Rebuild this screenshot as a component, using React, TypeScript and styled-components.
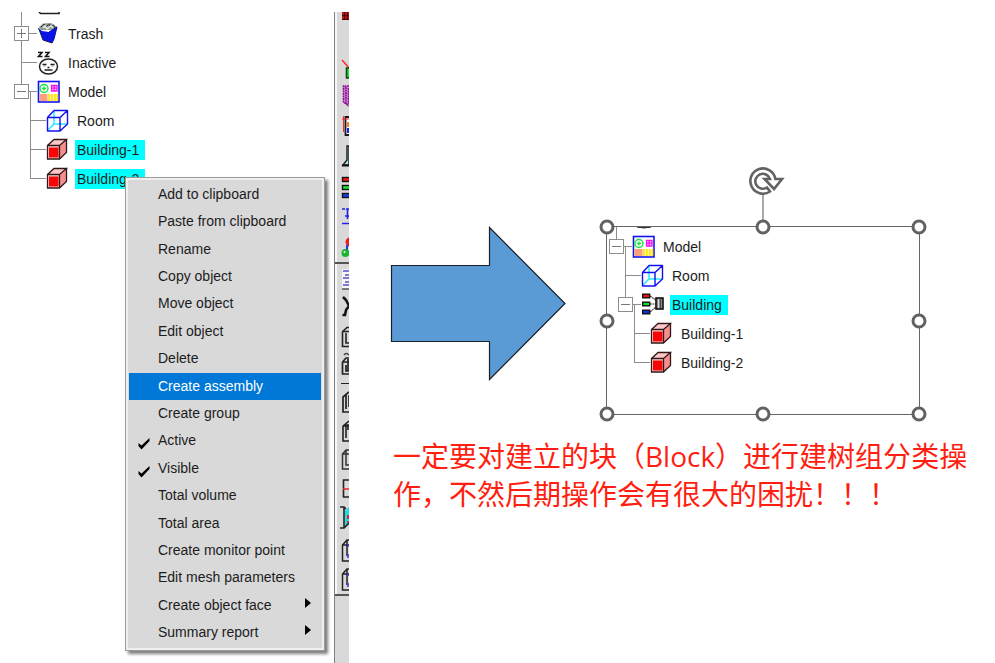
import React from "react";
import styled, { createGlobalStyle, css } from "styled-components";

const GlobalStyle = createGlobalStyle`
  * { box-sizing: border-box; }
  body { margin: 0; background: #fff; color: #1c1c1c; font-family: "Liberation Sans", Arial, sans-serif; }
  button { font: inherit; color: inherit; border: 0; padding: 0; background: none; }
`;

const guide = "#8c8c8c";

const Page = styled.main`
  display: grid;
  grid-template-columns: 349px minmax(0, 1fr);
  min-height: 100vh;
`;

const ModelPanel = styled.section`
  position: relative;
  display: flex;
  justify-content: space-between;
  min-height: 650px;
  margin-top: 12px;
`;

/* ---------- tree ---------- */

const TreeList = styled.ul<{ $nested?: boolean }>`
  list-style: none;
  margin: 0;
  padding: 0 0 0 ${(p) => (p.$nested ? 9 : 0)}px;
`;

const RootTree = styled(TreeList)`
  padding-left: 14px;
`;

const TreeItem = styled.li<{ $nested?: boolean }>`
  position: relative;
  &::before {
    content: "";
    position: absolute;
    left: 7px;
    top: 0;
    bottom: 0;
    width: 1px;
    background: ${guide};
  }
  ${(p) => p.$nested && css`&:first-child::before { top: -14px; }`}
  &:last-child::before { bottom: auto; height: 15px; }
  ${(p) => p.$nested && css`&:first-child:last-child::before { height: 29px; }`}
`;

const TreeRow = styled.div`
  display: flex;
  align-items: center;
  height: 29px;
`;

const CutRow = styled.li<{ $height: number }>`
  position: relative;
  display: flex;
  height: ${(p) => p.$height}px;
  padding-left: 7px;
  overflow: hidden;
  &::before {
    content: "";
    width: 1px;
    margin-right: 15px;
    background: ${guide};
  }
`;

const Branch = styled.span`
  position: relative;
  display: flex;
  width: 23px;
  height: 15px;
  &::before {
    content: "";
    position: absolute;
    left: 8px;
    right: 0;
    top: 7px;
    height: 1px;
    background: ${guide};
  }
`;

const Expander = styled.button`
  position: relative;
  display: flex;
  width: 15px;
  height: 15px;
  border: 1px solid ${guide};
  background: #fff;
`;

const TreeIcon = styled.svg`
  flex: none;
  width: 24px;
  height: 24px;
  margin-right: 5px;
`;

const Label = styled.span<{ $selected?: boolean }>`
  padding: 0 6px 0 2px;
  font-size: 14px;
  line-height: 20px;
  white-space: nowrap;
  background: ${(p) => (p.$selected ? "#00ffff" : "transparent")};
`;

type IconName = "trash" | "inactive" | "model" | "room" | "block" | "group";

const drawings: Record<IconName, React.ReactNode> = {
  trash: (
    <>
      <path d="M2 5 6 1.500 14 1 20 5 17 8 4 8Z" fill="#8d9a96" />
      <path d="M4 5 7 2 9 5 12 2 13 5 17 3 18 6" fill="none" stroke="#222" strokeDasharray="2 1" />
      <path d="M6 6 8 4 10 7 14 4 16 6" fill="none" stroke="#e8e8e8" strokeWidth="1.5" />
      <path d="M1.500 6 5 9 12 10 20 5 17 17 15 21 6 18Z" fill="#0a14e6" />
      <path d="M1.500 6 6 18 15 21" fill="none" stroke="#1a1a50" />
      <path d="M12 10 20 5 17 17 15 21" fill="none" stroke="#0808a0" />
    </>
  ),
  inactive: (
    <>
      <path d="M1 1.500H5L1.500 5.500H5.500M8 1.500H12L8.500 5.500H12.500" fill="none" stroke="#111" strokeWidth="1.5" />
      <ellipse cx="11.500" cy="15.500" rx="9" ry="7.500" fill="#fff" stroke="#222" strokeWidth="1.5" />
      <path d="M5.500 13.500H9.500M13.500 13.500H17.500M10.500 16.500H12.500M7.500 19H15.500" stroke="#222" strokeWidth="1.3" />
      <path d="M6.500 15H8.500M14.500 15H16.500" stroke="#888" />
    </>
  ),
  model: (
    <>
      <rect x="1.500" y="1.500" width="20.500" height="20.500" fill="#fff" stroke="#1414ee" strokeWidth="1.6" />
      <circle cx="7" cy="8.500" r="4" fill="none" stroke="#12e63a" strokeWidth="1.4" />
      <path d="M5 8.500H9M7 6.500V10.500" stroke="#12e63a" strokeWidth="1.3" />
      <path d="M14.500 5.500H20V11H14.500ZM17.200 5.500V11M14.500 8.200H20" fill="#ffc8ff" stroke="#f411e8" strokeWidth="1.3" />
      <rect x="2.500" y="14" width="8" height="7" fill="#ffa078" />
      <rect x="11" y="14" width="10" height="7" fill="#fff9a0" />
      <path d="M12 14V21M15 14V21M18 14V21M20.500 14V21" stroke="#ffe000" strokeWidth="1.4" />
    </>
  ),
  room: (
    <>
      <path d="M8 2V15H21M8 15 2 21" fill="none" stroke="#28eaff" strokeWidth="1.5" />
      <path d="M1.500 8.500H14V22H1.500ZM1.500 8.500 8 1.500H21.500L14 8.500M21.500 1.500V15L14 22" fill="none" stroke="#1212ef" strokeWidth="1.4" strokeLinejoin="round" />
    </>
  ),
  block: (
    <>
      <path d="M1.500 7.500 8 1.500H20.500L14 7.500Z" fill="#ffc8c8" />
      <path d="M14 7.500 20.500 1.500V14.500L14 21Z" fill="#f58f8f" />
      <path d="M1.500 7.500H13.500V21H1.500Z" fill="#ffd2d2" />
      <rect x="3" y="9.500" width="9.500" height="10" fill="#fa0505" />
      <path d="M1.500 7.500H13.500V21H1.500ZM1.500 7.500 8 1.500H20.500L13.500 7.500M20.500 1.500V14.500L13.500 21" fill="none" stroke="#301818" strokeWidth="1.3" />
    </>
  ),
  group: (
    <>
      <path d="M9 3 15 7M9 11H15M9 19 15 14" stroke="#444" strokeWidth="1.200" strokeDasharray="2 .5" />
      <rect x="1.700" y="1.200" width="7" height="3.600" fill="#f01010" stroke="#111" strokeWidth="1.4" />
      <rect x="1.700" y="9.200" width="7" height="3.600" fill="#10e030" stroke="#111" strokeWidth="1.4" />
      <rect x="1.700" y="17.200" width="7" height="3.600" fill="#1030e8" stroke="#111" strokeWidth="1.4" />
      <rect x="15" y="5" width="7" height="11" fill="#8c8c8c" stroke="#111" strokeWidth="1.6" />
      <path d="M17.500 6V15" stroke="#ddd" />
      <path d="M19.500 6V15" stroke="#444" />
    </>
  ),
};

interface Node {
  label: string;
  icon: IconName;
  selected?: boolean;
  open?: boolean;
  children?: Node[];
}

function TreeNode({ node, nested }: { node: Node; nested?: boolean }) {
  return (
    <TreeItem $nested={nested}>
      <TreeRow>
        <Branch>
          {node.open !== undefined && (
            <Expander aria-label={`Toggle ${node.label}`} aria-expanded={node.open}>
              <svg width="13" height="13" viewBox="0 0 13 13" aria-hidden="true">
                <path d={node.open ? "M2 6.500H11" : "M2 6.500H11M6.500 2V11"} stroke="#777" />
              </svg>
            </Expander>
          )}
        </Branch>
        <TreeIcon viewBox="0 0 24 24" aria-hidden="true">{drawings[node.icon]}</TreeIcon>
        <Label $selected={node.selected}>{node.label}</Label>
      </TreeRow>
      {node.children && (
        <TreeList $nested>
          {node.children.map((c) => <TreeNode key={c.label} node={c} nested />)}
        </TreeList>
      )}
    </TreeItem>
  );
}

const before: Node[] = [
  { label: "Trash", icon: "trash", open: false },
  { label: "Inactive", icon: "inactive" },
  {
    label: "Model", icon: "model", open: true,
    children: [
      { label: "Room", icon: "room" },
      { label: "Building-1", icon: "block", selected: true },
      { label: "Building-2", icon: "block", selected: true },
    ],
  },
];

const after: Node[] = [
  {
    label: "Model", icon: "model", open: true,
    children: [
      { label: "Room", icon: "room" },
      {
        label: "Building", icon: "group", open: true, selected: true,
        children: [
          { label: "Building-1", icon: "block" },
          { label: "Building-2", icon: "block" },
        ],
      },
    ],
  },
];

/* ---------- context menu ---------- */

const ContextMenu = styled.div`
  position: absolute;
  left: 125px;
  top: 165px;
  bottom: 12px;
  z-index: 3;
  display: grid;
  grid-auto-rows: 1fr;
  width: 200px;
  padding: 3px;
  border: 1px solid #9c9c9c;
  background: #d9d9d9;
  box-shadow: inset 0 0 0 2px #efefef, 3px 3px 3px rgba(0, 0, 0, 0.5);
`;

const MenuItem = styled.button<{ $active?: boolean }>`
  display: grid;
  grid-template-columns: 29px 1fr 20px;
  align-items: center;
  padding-bottom: 2px;
  font-size: 14px;
  text-align: left;
  white-space: nowrap;
  color: ${(p) => (p.$active ? "#fff" : "#1c1c1c")};
  background: ${(p) => (p.$active ? "#0078d7" : "transparent")};
`;

const MenuMark = styled.svg`
  width: 14px;
  height: 14px;
  margin: 6px 0 0 8px;
`;

const MenuArrow = styled.svg`
  width: 8px;
  height: 12px;
  margin: 0 0 4px 3px;
`;

const menu: { text: string; checked?: boolean; sub?: boolean; active?: boolean }[] = [
  { text: "Add to clipboard" },
  { text: "Paste from clipboard" },
  { text: "Rename" },
  { text: "Copy object" },
  { text: "Move object" },
  { text: "Edit object" },
  { text: "Delete" },
  { text: "Create assembly", active: true },
  { text: "Create group" },
  { text: "Active", checked: true },
  { text: "Visible", checked: true },
  { text: "Total volume" },
  { text: "Total area" },
  { text: "Create monitor point" },
  { text: "Edit mesh parameters" },
  { text: "Create object face", sub: true },
  { text: "Summary report", sub: true },
];

/* ---------- toolbar ---------- */

const Toolbar = styled.div`
  width: 15px;
  border-left: 1px solid #808080;
  background: #d9d9d9;
`;

const ToolGroup = styled.div`
  display: flex;
  flex-direction: column;
  padding-left: 2px;
  border-bottom: 2px solid #555;
  box-shadow: inset 2px 0 0 #f7f7f7;
`;

const Tool = styled.button<{ $height: number }>`
  display: flex;
  width: 12px;
  height: ${(p) => p.$height}px;
  overflow: hidden;
`;

const Divider = styled.hr`
  width: 8px;
  height: 1px;
  margin: 3px 0 3px 4px;
  border: 0;
  background: #222;
`;

const Spacer = styled.div`
  height: 4px;
`;

const box = (
  <>
    <path d="M5.500 9.500 10 5.500H12M5.500 9.500V24.500H12M5.500 9.500H12M9 11V21H12" fill="none" stroke="#222" strokeWidth="1.6" />
  </>
);

const displayTools: [string, number, React.ReactNode][] = [
  ["Grid", 40, <><rect x="5" y="0" width="7" height="8" fill="#4a0808" /><path d="M5 1.500H12M5 5.500H12" stroke="#e01818" strokeWidth="2" strokeDasharray="2 1" /></>],
  ["Probe", 30, <><path d="M5 8 12 16" stroke="#ff2a2a" strokeWidth="1.500" /><path d="M12 16H9.500V26H12" fill="#13e430" stroke="#1c3c1c" strokeWidth="1.600" /></>],
  ["Surface", 30, <path d="M12 4 6.500 4V20L12 24M9 5V22M11.500 6V22" fill="#d78bdd" stroke="#8a168f" strokeWidth="1.600" strokeDasharray="2 .5" />],
  ["Plane cut", 30, <><path d="M12 5H8.500V23H12" fill="#fff" stroke="#181818" strokeWidth="1.800" /><path d="M5 7H12M6.500 4V20" stroke="#f52a2a" /><rect x="10" y="10" width="2" height="5" fill="#ff7a18" /><rect x="10" y="16" width="2" height="5" fill="#2020ef" /></>],
  ["Inspect", 30, <><path d="M12 4H10V18L6 23H12Z" fill="#aee4ee" stroke="#222" strokeWidth="1.500" /><path d="M5 23.500H12" stroke="#111" strokeWidth="2" /></>],
  ["Assemblies", 30, <><rect x="5.500" y="5.500" width="8" height="4" fill="#f01616" stroke="#111" strokeWidth="1.400" /><rect x="5.500" y="13.500" width="8" height="4" fill="#18e434" stroke="#111" strokeWidth="1.400" /><rect x="5.500" y="21.500" width="8" height="4" fill="#1840f0" stroke="#111" strokeWidth="1.400" /></>],
  ["Networks", 30, <path d="M5 7H8M9 7H12M10.500 7V17M5 21.500H12M8 14H12" fill="none" stroke="#2020ef" strokeWidth="1.600" />],
  ["Materials", 30, <><circle cx="13" cy="10" r="4.500" fill="#ed1e20" /><path d="M10 13V20" stroke="#3030e0" strokeWidth="2" /><circle cx="8.500" cy="21" r="4" fill="#18b52c" /><circle cx="7.500" cy="20" r="1" fill="#fff" /></>],
];

const editTools: [string, React.ReactNode][] = [
  ["Edit", <><rect x="5" y="5" width="7" height="20" fill="#f4f4f8" /><path d="M6 7H12M8 11H12M6 14H12M8 18H12M6 21H12" stroke="#5353c7" strokeWidth="1.500" /><path d="M5 25H12" stroke="#555" strokeWidth="1.500" /></>],
  ["Delete", <path d="M6 4 9 7 12 13M12 13 9 17 8 22H5.500" fill="none" stroke="#111" strokeWidth="2.500" />],
  ["Move", box],
  ["Copy", <><path d="M7 4Q9 1 12 4" fill="none" stroke="#444" strokeWidth="1.500" /><path d="M5.500 11 9 7H12M5.500 11V23H12M5.500 11H12M9 14V20H12M11 8V20" fill="none" stroke="#222" strokeWidth="1.700" /></>],
];

const alignTools: [string, React.ReactNode][] = [
  ["Align left", <path d="M12 5 6 10V25H12M9 8V22M11 9H12V20" fill="none" stroke="#222" strokeWidth="1.700" />],
  ["Align center", <path d="M12 5 6 10V25H12M6 10H12M9 8V22M11 8V14" fill="none" stroke="#222" strokeWidth="1.600" />],
  ["Align faces", <path d="M12 5H9L5.500 9V24H12M5.500 9H12M9 5V20H12" fill="none" stroke="#333" strokeWidth="1.500" />],
  ["Align edge", <><path d="M12 6H6.500V23H12" fill="none" stroke="#222" strokeWidth="1.600" /><path d="M6 15H12" stroke="#f12323" strokeWidth="1.500" /></>],
  ["Align vertex", <><path d="M8 8 12 4V20L8 24Z" fill="#19dde7" /><path d="M3 4H7L9 6M3 25H7L12 20M7 4V25" fill="none" stroke="#222" strokeWidth="1.600" /><path d="M11 12V20" stroke="#e22" strokeWidth="2" strokeDasharray="4 2" /></>],
];

const morphTools = ["Morph faces", "Morph edges"];

const morphDrawing = (
  <>
    <path d="M12 4H10L5.500 9V25H12M5.500 9H12M10 4V20" fill="none" stroke="#222" strokeWidth="1.500" />
    <path d="M11 8V11M11 18V22" stroke="#3434e8" strokeWidth="1.500" />
  </>
);

function ToolButton({ name, height, children }: { name: string; height: number; children: React.ReactNode }) {
  return (
    <Tool $height={height} aria-label={name}>
      <svg width="12" height={height} viewBox={`0 0 12 ${height}`} aria-hidden="true">{children}</svg>
    </Tool>
  );
}

/* ---------- result side ---------- */

const Slide = styled.section`
  padding-top: 226px;
`;

const Comparison = styled.div`
  display: flex;
  align-items: flex-start;
  gap: 40px;
  padding: 0 75px 0 41px;
`;

const BigArrow = styled.svg`
  flex: none;
  width: 176px;
  height: 156px;
`;

const SelectionFrame = styled.div`
  position: relative;
  flex: 1;
  min-width: 200px;
  padding-bottom: 37px;
  border: 1px solid #666;
`;

const FrameTree = styled(TreeList)`
  padding-left: 2px;
`;

const Handle = styled.span<{ $x: number; $y: number }>`
  position: absolute;
  left: ${(p) => p.$x}%;
  top: ${(p) => p.$y}%;
  width: 15px;
  height: 15px;
  border: 3px solid #626262;
  border-radius: 50%;
  background: #fff;
  transform: translate(-50%, -50%);
`;

const RotateHandle = styled.svg`
  position: absolute;
  left: 50%;
  bottom: 100%;
  width: 48px;
  height: 62px;
  transform: translateX(-50%);
`;

const Caption = styled.p`
  margin: 22px 0 0;
  padding: 0 20px 0 44px;
  font-family: "Open Sans", "Noto Sans CJK SC", sans-serif;
  font-size: 28px;
  line-height: 38px;
  color: #ff1e0f;
`;

const handles: [number, number][] = [[0, 0], [50, 0], [100, 0], [0, 50], [100, 50], [0, 100], [50, 100], [100, 100]];

export default function App() {
  return (
    <>
      <GlobalStyle />
      <Page>
        <ModelPanel>
          <RootTree>
            <CutRow $height={7}>
              <svg width="24" height="7" viewBox="0 0 24 7" aria-hidden="true">
                <path d="M2 0 3.500 1.500H22V0" fill="none" stroke="#222" strokeWidth="1.600" />
              </svg>
            </CutRow>
            {before.map((n) => <TreeNode key={n.label} node={n} />)}
          </RootTree>
          <Toolbar>
            <ToolGroup>
              {displayTools.map(([name, height, art]) => (
                <ToolButton key={name} name={name} height={height}>{art}</ToolButton>
              ))}
            </ToolGroup>
            <ToolGroup>
              {editTools.map(([name, art]) => <ToolButton key={name} name={name} height={29}>{art}</ToolButton>)}
              <Divider />
              {alignTools.map(([name, art]) => <ToolButton key={name} name={name} height={29}>{art}</ToolButton>)}
              <Spacer />
              {morphTools.map((name) => <ToolButton key={name} name={name} height={29}>{morphDrawing}</ToolButton>)}
            </ToolGroup>
          </Toolbar>
          <ContextMenu role="menu">
            {menu.map((m) => (
              <MenuItem
                key={m.text}
                $active={m.active}
                role={m.checked ? "menuitemcheckbox" : "menuitem"}
                aria-checked={m.checked}
                aria-haspopup={m.sub ? "menu" : undefined}
              >
                {m.checked ? (
                  <MenuMark viewBox="0 0 14 14" aria-hidden="true">
                    <path d="M1.500 7V10L4.500 13.500 12.500 5V2L4.500 9.500Z" fill="#000" />
                  </MenuMark>
                ) : <span />}
                <span>{m.text}</span>
                {m.sub && (
                  <MenuArrow viewBox="0 0 8 12" aria-hidden="true">
                    <path d="M1 1 7 6 1 11Z" fill="#000" />
                  </MenuArrow>
                )}
              </MenuItem>
            ))}
          </ContextMenu>
        </ModelPanel>

        <Slide>
          <Comparison>
            <BigArrow viewBox="0 0 176 156" aria-hidden="true">
              <path d="M1.500 39.500H99.500V1.500L175 77.500 99.500 153.500V115.500H1.500Z" fill="#5b9bd5" stroke="#1b1f26" strokeWidth="1.200" />
            </BigArrow>
            <SelectionFrame>
              <FrameTree>
                <CutRow $height={5}>
                  <svg width="24" height="5" viewBox="0 0 24 5" aria-hidden="true">
                    <path d="M5 0Q12 2 19 0Z" fill="#222" stroke="#333" />
                  </svg>
                </CutRow>
                {after.map((n) => <TreeNode key={n.label} node={n} />)}
              </FrameTree>
              <RotateHandle viewBox="-24 -16 48 62" aria-hidden="true">
                <path d="M0 13V46" stroke="#555" />
                <path d="M12.400 -2A12.600 12.600 0 1 0 7 10.500L4 6.500A7.500 7.500 0 1 1 7 -2H1.500L11 8 19 -2Z" fill="#fff" stroke="#626262" strokeWidth="2.600" />
              </RotateHandle>
              {handles.map(([x, y]) => <Handle key={`${x}-${y}`} $x={x} $y={y} />)}
            </SelectionFrame>
          </Comparison>
          <Caption>一定要对建立的块（Block）进行建树组分类操作，不然后期操作会有很大的困扰！！！</Caption>
        </Slide>
      </Page>
    </>
  );
}
